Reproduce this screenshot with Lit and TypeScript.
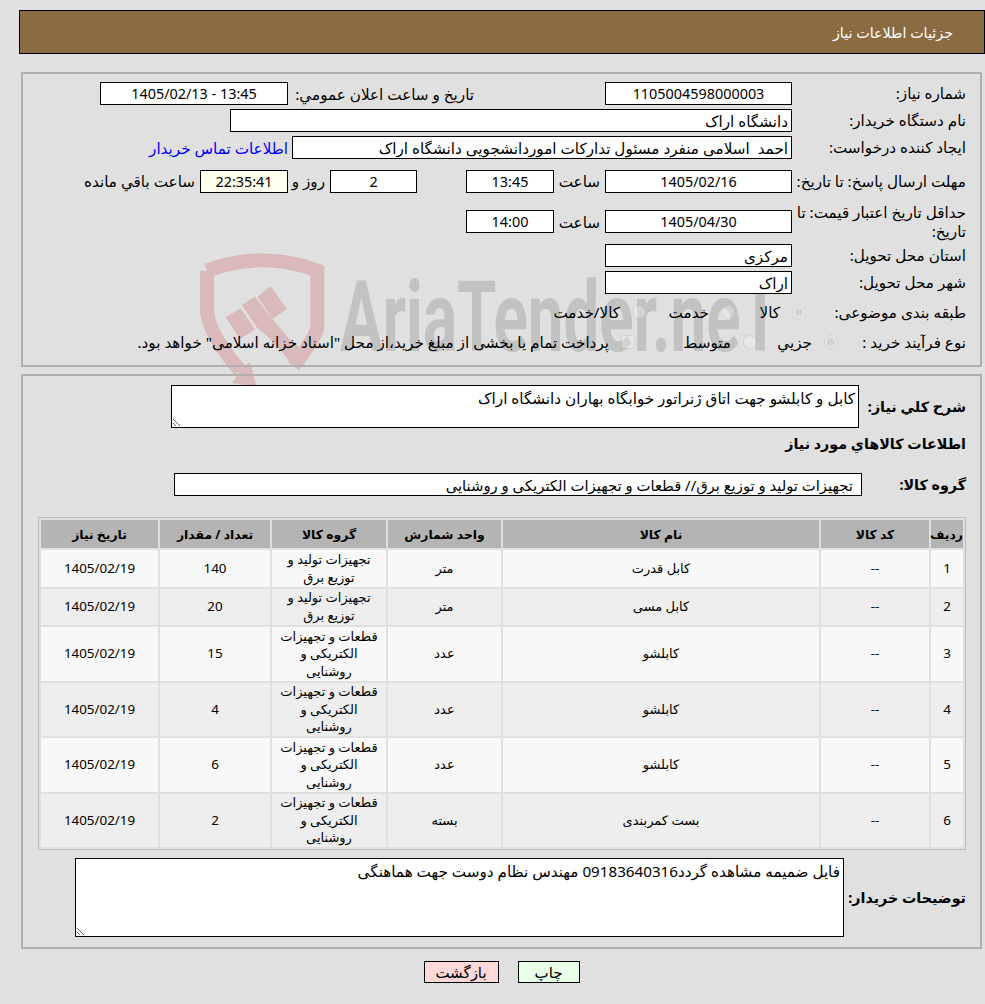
import { LitElement, html, css } from "lit";
import { customElement } from "lit/decorators.js";

const G1 = "تجهیزات تولید و توزیع برق";
const G2 = "قطعات و تجهیزات الکتریکی و روشنایی";
const ROWS = [
  { n: "1", name: "کابل قدرت", unit: "متر", group: G1, qty: "140", h: 37 },
  { n: "2", name: "کابل مسی", unit: "متر", group: G1, qty: "20", h: 36 },
  { n: "3", name: "کابلشو", unit: "عدد", group: G2, qty: "15", h: 54 },
  { n: "4", name: "کابلشو", unit: "عدد", group: G2, qty: "4", h: 53 },
  { n: "5", name: "کابلشو", unit: "عدد", group: G2, qty: "6", h: 54 },
  { n: "6", name: "بست کمربندی", unit: "بسته", group: G2, qty: "2", h: 53 },
];

@customElement("app-root")
export class AppRoot extends LitElement {
  static styles = css`
    :host {
      display: block;
      position: relative;
      min-height: 100vh;
      background: #e0e0e0;
      color: #000;
      font-family: "Noto Sans", "DejaVu Sans", sans-serif;
      font-size: 15.2px;
      overflow: hidden;
    }
    .page { position: relative; display: flow-root; direction: rtl; }
    .watermark { position: absolute; left: 190px; top: 240px; width: 600px; height: 180px; }
    .wm-text { font-family: Roboto, sans-serif; font-weight: 700; font-size: 292px; fill: #c2c2c2; }
    .title {
      margin: 10px 0 18px 19px;
      height: 44px;
      box-sizing: border-box;
      background: #8b6c42;
      border: 1px solid #000;
      color: #fff;
      font-size: 14.3px;
      display: flex;
      align-items: center;
      padding: 0 31px 0 0;
    }
    .panel { margin: 0 3px 0 21px; border: 2px solid #b0b0b0; }
    .p1 { padding: 6px 14px 9px 0; margin-bottom: 7px; }
    .p2 { padding: 9px 14px 10px 15px; }
    .row { display: flex; align-items: center; height: 27px; }
    .r40 { height: 40px; }
    .r41 { height: 41px; }
    .r32 { height: 32px; }
    .r28 { height: 28px; }
    .lab { width: 170px; padding-left: 4px; line-height: 19px; flex: none; white-space: normal; }
    .lab160 { width: 156px; }
    .lab128 { width: 124px; }
    .field {
      box-sizing: border-box;
      height: 23px;
      border: 1px solid #000;
      background: #fff;
      display: flex;
      align-items: center;
      justify-content: center;
      font-size: 14.4px;
      flex: none;
      white-space: pre;
    }
    .ltr { direction: ltr; }
    .start { justify-content: flex-start; padding-right: 3px; font-size: 15.2px; }
    .w187 { width: 187px; }
    .w188 { width: 188px; }
    .w88 { width: 88px; }
    .w87 { width: 87px; }
    .w562 { width: 562px; }
    .w500 { width: 500px; }
    .timer { background: #ffffee; }
    .gap131 { margin-right: 131px; width: 182px; padding-left: 4px; white-space: nowrap; }
    .link { color: #0000ff; margin-right: 4px; white-space: nowrap; }
    .hour { width: 46px; padding-right: 5px; }
    .gap49 { margin-right: 49px; }
    .days { width: 37px; padding-right: 5px; white-space: nowrap; }
    .left { padding-right: 5px; white-space: nowrap; }
    .opt { display: flex; align-items: center; flex: none; white-space: nowrap; }
    .opt input { margin: 0; width: 14px; height: 14px; opacity: 0.5; flex: none; }
    .opt span { margin-right: 12px; }
    .o1 { width: 71px; }
    .o2 { width: 89px; }
    .o4 { width: 81px; }
    .o5 { width: 122px; }
    .area {
      box-sizing: border-box;
      border: 1px solid #000;
      background: #fff;
      padding: 3px 3px 0 0;
      overflow: hidden;
      resize: vertical;
      flex: none;
      line-height: 19px;
    }
    .a1 { width: 688px; height: 43px; }
    .a2 { width: 769px; height: 79px; }
    .bold { font-weight: 700; font-size: 14.3px; white-space: nowrap; }
    .blab { width: 107px; flex: none; }
    .desc { height: 43px; }
    .sect { height: 20px; margin-top: 5px; }
    .grp { height: 23px; margin-top: 20px; }
    .grp .field { width: 688px; justify-content: flex-start; padding-right: 8px; font-size: 14.8px; }
    .grp .blab { width: 104px; }
    table {
      margin-top: 21px;
      width: 928px;
      box-sizing: border-box;
      border: 1px solid #bcbcbc;
      border-spacing: 2px;
      table-layout: fixed;
      text-align: center;
      font-size: 13px;
    }
    th { background: #b4b4b4; height: 28px; padding: 0; font-size: 12.4px; font-weight: 700; }
    td { padding: 0 6px; line-height: 17.6px; }
    td.num { font-size: 13.4px; }
    tbody tr:nth-child(odd) td { background: #f8f8f8; }
    tbody tr:nth-child(even) td { background: #eeeeee; }
    .c1 { width: 32px; } .c2 { width: 108px; } .c3 { width: 316px; }
    .c4 { width: 113px; } .c5 { width: 114px; } .c6 { width: 110px; } .c7 { width: 117px; }
    .notes { height: 79px; margin-top: 8px; }
    .notes .blab { width: 122px; }
    .btns { display: flex; justify-content: center; gap: 19px; margin-top: 12px; padding-left: 18px; }
    .btn {
      box-sizing: border-box;
      height: 22px;
      border: 1px solid #000;
      display: flex;
      align-items: center;
      justify-content: center;
      font-size: 15px;
    }
    .print { width: 62px; background: #e8ffe8; }
    .back { width: 75px; background: #ffd8d8; }
  `;

  render() {
    return html`
      <svg class="watermark" viewBox="0 0 1800 540" aria-hidden="true">
        <g fill="none" stroke="#dab9bb" stroke-width="42">
          <path d="M51 92Q215 30 382 92L382 265Q372 300 310 378"/>
          <path d="M51 92L51 215Q58 285 150 392"/>
        </g>
        <g fill="#dab9bb">
          <path d="M107 232L152 205 195 268 150 298Z"/>
          <path d="M155 195L195 170 250 240 300 300 350 340 312 378 245 300 200 262Z"/>
          <path d="M203 170L242 138 290 207 248 237Z"/>
          <path d="M180 366L200 440 126 429 150 392Z"/>
        </g>
        <text class="wm-text" x="450" y="333" textLength="1320" lengthAdjust="spacingAndGlyphs">AriaTender.neT</text>
      </svg>
      <div class="page">
        <div class="title">جزئیات اطلاعات نیاز</div>
        <div class="panel p1">
          <div class="row">
            <div class="lab">شماره نیاز:</div>
            <div class="field w187">1105004598000003</div>
            <div class="gap131">تاریخ و ساعت اعلان عمومي:</div>
            <div class="field w188 ltr">1405/02/13 - 13:45</div>
          </div>
          <div class="row">
            <div class="lab">نام دستگاه خریدار:</div>
            <div class="field start w562">دانشگاه اراک</div>
          </div>
          <div class="row">
            <div class="lab">ایجاد کننده درخواست:</div>
            <div class="field start w500">احمد  اسلامی منفرد مسئول تدارکات اموردانشجویی دانشگاه اراک</div>
            <div class="link">اطلاعات تماس خریدار</div>
          </div>
          <div class="row r40">
            <div class="lab">مهلت ارسال پاسخ: تا تاریخ:</div>
            <div class="field w187">1405/02/16</div>
            <div class="hour">ساعت</div>
            <div class="field w88">13:45</div>
            <div class="field w87 gap49">2</div>
            <div class="days">روز و</div>
            <div class="field w88 timer">22:35:41</div>
            <div class="left">ساعت باقي مانده</div>
          </div>
          <div class="row r41">
            <div class="lab">حداقل تاریخ اعتبار قیمت: تا تاریخ:</div>
            <div class="field w187">1405/04/30</div>
            <div class="hour">ساعت</div>
            <div class="field w88">14:00</div>
          </div>
          <div class="row">
            <div class="lab">استان محل تحویل:</div>
            <div class="field start w187">مرکزی</div>
          </div>
          <div class="row">
            <div class="lab">شهر محل تحویل:</div>
            <div class="field start w187">اراک</div>
          </div>
          <div class="row r32">
            <div class="lab lab160">طبقه بندی موضوعی:</div>
            <label class="opt o1"><input type="radio" name="a" disabled checked /><span>کالا</span></label>
            <label class="opt o2"><input type="radio" name="a" disabled /><span>خدمت</span></label>
            <label class="opt"><input type="radio" name="a" disabled /><span>کالا/خدمت</span></label>
          </div>
          <div class="row r28">
            <div class="lab lab128">نوع فرآیند خرید :</div>
            <label class="opt o4"><input type="radio" name="b" disabled checked /><span>جزيي</span></label>
            <label class="opt o5"><input type="radio" name="b" disabled /><span>متوسط</span></label>
            <label class="opt"><input type="checkbox" disabled /><span>پرداخت تمام یا بخشی از مبلغ خرید،از محل "اسناد خزانه اسلامی" خواهد بود.</span></label>
          </div>
        </div>
        <div class="panel p2">
          <div class="row desc">
            <div class="bold blab">شرح کلي نیاز:</div>
            <div class="area a1">کابل و کابلشو جهت اتاق ژنراتور خوابگاه بهاران دانشگاه اراک</div>
          </div>
          <div class="row sect bold">اطلاعات کالاهاي مورد نیاز</div>
          <div class="row grp">
            <div class="bold blab">گروه کالا:</div>
            <div class="field">تجهیزات تولید و توزیع برق// قطعات و تجهیزات الکتریکی و روشنایی</div>
          </div>
          <table>
            <colgroup>
              <col class="c1" /><col class="c2" /><col class="c3" /><col class="c4" /><col class="c5" /><col class="c6" /><col class="c7" />
            </colgroup>
            <thead>
              <tr>
                <th>ردیف</th><th>کد کالا</th><th>نام کالا</th><th>واحد شمارش</th><th>گروه کالا</th><th>تعداد / مقدار</th><th>تاریخ نیاز</th>
              </tr>
            </thead>
            <tbody>
              ${ROWS.map(
                (r) => html`<tr style="height:${r.h}px">
                  <td class="num">${r.n}</td>
                  <td>--</td>
                  <td>${r.name}</td>
                  <td>${r.unit}</td>
                  <td>${r.group}</td>
                  <td class="num">${r.qty}</td>
                  <td class="num">1405/02/19</td>
                </tr>`
              )}
            </tbody>
          </table>
          <div class="row notes">
            <div class="bold blab">توضیحات خریدار:</div>
            <div class="area a2">فایل ضمیمه مشاهده گردد09183640316 مهندس نظام دوست جهت هماهنگی</div>
          </div>
        </div>
        <div class="btns">
          <div class="btn print">چاپ</div>
          <div class="btn back">بازگشت</div>
        </div>
      </div>
    `;
  }
}
